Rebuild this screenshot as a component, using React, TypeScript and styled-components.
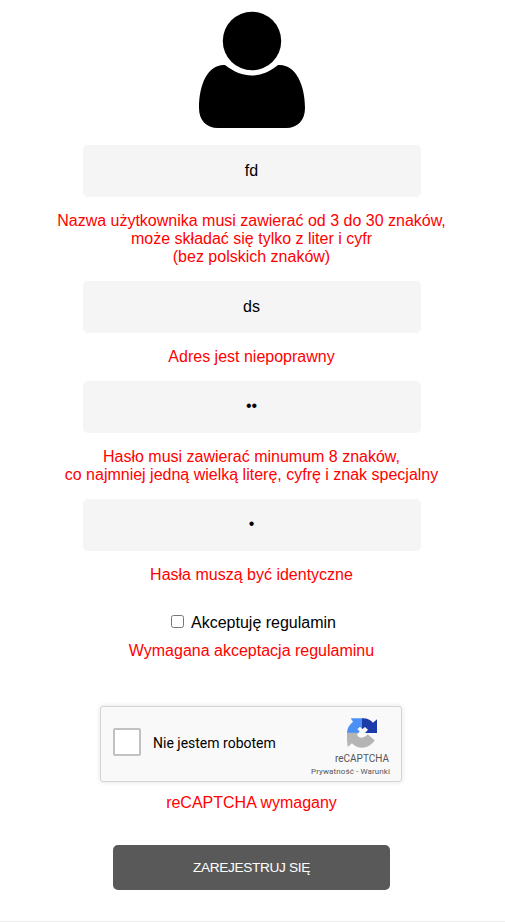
import React from "react";
import styled, { createGlobalStyle } from "styled-components";

const GlobalStyle = createGlobalStyle`
  *, *::before, *::after { box-sizing: border-box; }
  body {
    margin: 0;
    background: #fff;
    color: #000;
    font: 16px/18px "Liberation Sans", Arial, sans-serif;
    overflow: hidden;
  }
`;

const Form = styled.form`
  display: flex;
  flex-direction: column;
  align-items: center;
  width: 503px;
  height: 922px;
  padding-top: 11px;
`;

const Avatar = styled.svg`
  display: block;
  width: 108px;
  height: 118px;
  margin: 0 0 16px 1px;
  flex: none;
`;

const Field = styled.input`
  flex: none;
  width: 338px;
  height: 52px;
  margin-left: 1px;
  padding: 15px 16px 15px 15px;
  border: 0;
  border-radius: 5px;
  outline: 0;
  background: #f5f5f5;
  color: #000;
  font: inherit;
  text-align: center;

  &[type="password"] {
    padding-bottom: 17px;
  }
`;

const ErrorText = styled.p<{ $top?: number; $bottom?: number }>`
  flex: none;
  margin: ${(p) => p.$top ?? 15}px 0 ${(p) => p.$bottom ?? 15}px;
  color: #f00;
  text-align: center;
  white-space: nowrap;
`;

const Terms = styled.label`
  display: flex;
  align-items: flex-start;
  flex: none;
  height: 18px;
  gap: 7px;
  margin-left: 4px;
`;

const Checkbox = styled.input`
  width: 13px;
  height: 13px;
  margin: 1px 0 0;
`;

const Captcha = styled.div`
  display: flex;
  flex: none;
  width: 302px;
  height: 76px;
  margin-right: 1px;
  border: 1px solid #d3d3d3;
  border-radius: 3px;
  background: #f9f9f9;
  box-shadow: 0 0 4px 1px rgba(0, 0, 0, 0.08);
  font-family: Roboto, sans-serif;
`;

const CaptchaCheck = styled.div`
  display: flex;
  align-items: center;
  flex: 1;
  gap: 12px;
  padding: 0 0 5px 12px;
  font-size: 14px;
  line-height: 17px;
`;

const CaptchaBox = styled.span`
  width: 28px;
  height: 28px;
  border: 2px solid #c1c1c1;
  border-radius: 2px;
  background: #fff;
`;

const CaptchaLabel = styled.span`
  padding-top: 3px;
`;

const CaptchaBrand = styled.div`
  display: flex;
  flex-direction: column;
  align-items: flex-end;
  padding: 10px 11px 0 0;
  color: #555;
`;

const CaptchaLogo = styled.svg`
  width: 31px;
  height: 31px;
  margin: 1px 12px 0 0;
`;

const BrandName = styled.span`
  margin: 4px 1px 0 0;
  font-size: 10px;
  line-height: 12px;
`;

const BrandLinks = styled.span`
  margin-top: 2px;
  font-size: 8px;
  line-height: 10px;
  letter-spacing: 0.1px;
  white-space: nowrap;
`;

const Submit = styled.button`
  flex: none;
  width: 277px;
  height: 45px;
  padding: 0 0 1px;
  border: 0;
  border-radius: 5px;
  background: #595959;
  color: #fff;
  font: 13.7px "Liberation Sans", Arial, sans-serif;
  letter-spacing: -0.36px;
`;

const Divider = styled.hr`
  align-self: flex-start;
  width: 505px;
  height: 1px;
  margin: 31px 0 0;
  border: 0;
  flex: none;
  background: #ededed;
`;

export default function App() {
  return (
    <>
      <GlobalStyle />
      <Form>
        <Avatar viewBox="0 0 108 118">
          <circle cx="54" cy="30" r="29.200" />
          <path d="M27 54C10 53 1 73 1 97C1 109 8 117 20 117H88C100 117 107 109 107 97C107 73 97 52.500 80 54C63 68 45 68 27 54Z" />
        </Avatar>

        <Field type="text" defaultValue="fd" />
        <ErrorText>
          Nazwa użytkownika musi zawierać od 3 do 30 znaków,
          <br />
          może składać się tylko z liter i cyfr
          <br />
          (bez polskich znaków)
        </ErrorText>
        <Field type="text" defaultValue="ds" />
        <ErrorText>Adres jest niepoprawny</ErrorText>
        <Field type="password" defaultValue="ab" />
        <ErrorText>
          Hasło musi zawierać minumum 8 znaków,
          <br />
          co najmniej jedną wielką literę, cyfrę i znak specjalny
        </ErrorText>
        <Field type="password" defaultValue="a" />
        <ErrorText $bottom={30}>Hasła muszą być identyczne</ErrorText>

        <Terms>
          <Checkbox type="checkbox" />
          Akceptuję regulamin
        </Terms>
        <ErrorText $top={10} $bottom={46}>
          Wymagana akceptacja regulaminu
        </ErrorText>

        <Captcha>
          <CaptchaCheck>
            <CaptchaBox />
            <CaptchaLabel>Nie jestem robotem</CaptchaLabel>
          </CaptchaCheck>
          <CaptchaBrand>
            <CaptchaLogo viewBox="15 18 93 93">
              <path
                fill="#4a90f5"
                d="M26 19H61V51L54 44L46 52L53 58L49 63H15C15 49 22 38 33 29Z"
              />
              <path
                fill="#1c3aa9"
                d="M60 19C74 18 85 23 93 32L105 22V63H69L78 53L69 45L60 52Z"
              />
              <path
                fill="#b5b5b5"
                d="M15 62H49L45 68C50 80 67 80 77 67L98 85C82 112 47 114 30 94L17 105L15 84Z"
              />
            </CaptchaLogo>
            <BrandName>reCAPTCHA</BrandName>
            <BrandLinks>Prywatność - Warunki</BrandLinks>
          </CaptchaBrand>
        </Captcha>
        <ErrorText $top={12} $bottom={33}>
          reCAPTCHA wymagany
        </ErrorText>

        <Submit type="button">ZAREJESTRUJ SIĘ</Submit>
        <Divider />
      </Form>
    </>
  );
}
